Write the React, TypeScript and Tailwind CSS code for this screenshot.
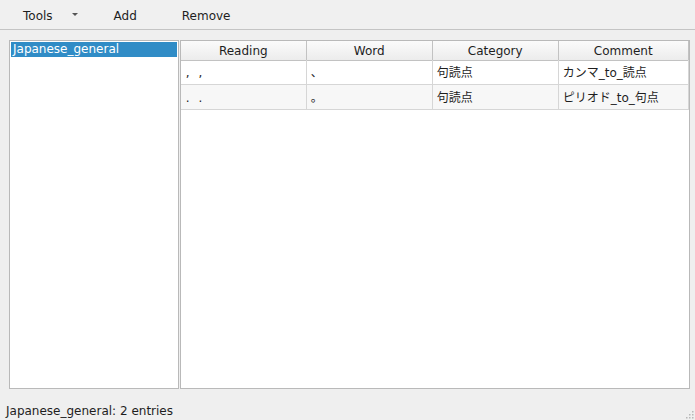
const rows = [
  { reading: ', ,', word: '、', category: '句読点', comment: 'カンマ_to_読点' },
  { reading: '. .', word: '。', category: '句読点', comment: 'ピリオド_to_句点' },
];

const cols = ['Reading', 'Word', 'Category', 'Comment'];

export default function App() {
  return (
    <div
      className="w-[695px] h-[420px] bg-[#efefef] text-[12px] text-[#1e1e1e] flex flex-col overflow-hidden relative"
      style={{ fontFamily: '"DejaVu Sans", "Noto Sans CJK JP", sans-serif' }}
    >
      {/* toolbar */}
      <div className="h-[30px] shrink-0 border-b border-[#c4c4c4] bg-[#f0f0f0] flex items-center pt-[2px]">
        <span className="ml-[23px]">Tools</span>
        <span className="ml-[19px] w-0 h-0 border-l-[3px] border-r-[3px] border-t-[3px] border-l-transparent border-r-transparent border-t-[#555] mt-[-2px]" />
        <span className="ml-[36px]">Add</span>
        <span className="ml-[45px]">Remove</span>
      </div>

      {/* main area */}
      <div className="flex gap-[1px] pl-[9px] pr-[5px] pt-[10px] h-[359px] shrink-0">
        <div className="w-[170px] border border-[#b9b9b9] bg-white p-[1px]">
          <div className="h-[15px] leading-[15px] bg-[#308cc6] text-white pl-[2px]">Japanese_general</div>
        </div>
        <div className="w-[511px] border border-[#b9b9b9] bg-white">
          <div className="grid grid-cols-[126px_126px_126px_130px] h-[19px]">
            {cols.map((c) => (
              <div
                key={c}
                className="flex items-center justify-center pt-[1px] bg-gradient-to-b from-[#fbfbfb] to-[#ececec] border-b border-r border-[#c2c2c2]"
              >
                {c}
              </div>
            ))}
          </div>
          {rows.map((r, ri) => (
            <div
              key={ri}
              className={`grid grid-cols-[126px_126px_126px_130px] h-[25px] ${ri % 2 ? 'bg-[#f7f7f7]' : 'bg-white'}`}
            >
              {[r.reading, r.word, r.category, r.comment].map((v, i) => (
                <div
                  key={i}
                  className={`flex items-center pl-[4px] pt-[1px] border-b border-r border-[#d6d6d6] text-[12px] whitespace-pre ${
                    i === 0 ? 'pl-[5px] tracking-[2.5px]' : ''
                  }`}
                >
                  {v}
                </div>
              ))}
            </div>
          ))}
        </div>
      </div>

      {/* status */}
      <div className="pl-[6px] pt-[13px] text-[12px]">Japanese_general: 2 entries</div>

      {/* size grip */}
      <svg className="absolute right-[1px] bottom-[1px]" width="8" height="8" viewBox="0 0 8 8">
        {[
          [6, 0], [3, 3], [6, 3], [0, 6], [3, 6], [6, 6],
        ].map(([x, y], i) => (
          <rect key={i} x={x} y={y} width="1.5" height="1.5" fill="#b8b8b8" />
        ))}
      </svg>
    </div>
  );
}
